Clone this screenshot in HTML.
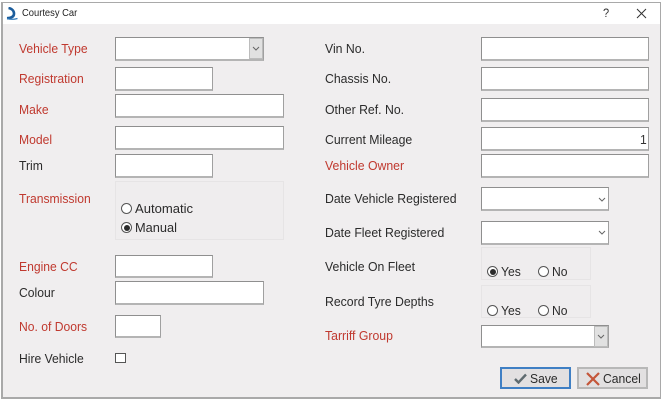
<!DOCTYPE html>
<html>
<head>
<meta charset="utf-8">
<style>
html,body{margin:0;padding:0;background:#fff;}
body{width:663px;height:401px;overflow:hidden;position:relative;font-family:"Liberation Sans",sans-serif;}
#win{position:absolute;left:0;top:0;width:663px;height:401px;filter:blur(0.35px);}
#win div,#win span,#win svg{position:absolute;box-sizing:border-box;}
.frame{left:1px;top:2px;width:660px;height:397px;background:#f0eeef;border:2px solid #a9a9a9;border-top-width:1px;border-right-width:1px;}
.tbar{left:3px;top:3px;width:657px;height:21px;background:#fff;}
.t{font-size:13.2px;line-height:16px;height:16px;white-space:nowrap;color:#2b2b2b;transform:scaleX(.92);transform-origin:0 50%;}
.c{transform:scaleX(.93);}
.r{color:#c0392f;}
.i{background:#fff;border:1px solid #8f8f8f;border-right:1px solid #a0a0a0;border-bottom:2px solid #b4b4b4;}
.g{background:#efedee;border:1px solid #e6e4e5;}
.rad{width:11px;height:11px;border:1px solid #555;border-radius:50%;background:#fff;}
.rad.on::after{content:"";position:absolute;left:1.5px;top:1.5px;width:6px;height:6px;border-radius:50%;background:#2b2b2b;}
.ddb{background:#e1e1e1;border:1px solid #bcbcbc;}
.btn{background:#e2e0e1;border:2px solid #b8b8b8;}
</style>
</head>
<body>
<div id="win">
<div class="frame"></div>
<div class="tbar"></div>
<svg style="left:6px;top:7px" width="12" height="13" viewBox="0 0 12 13"><path d="M2.5 1 C6 1.5 8.2 4 8 7 C7.8 9.5 5.5 11 1 11.2" stroke="#1c5d9c" stroke-width="2.6" fill="none"/><path d="M1 11.5 C4 12.5 8 12.5 11.5 11.5" stroke="#2f78b8" stroke-width="1.2" fill="none"/></svg>
<div class="t" style="left:22px;top:6px;font-size:10.2px;color:#222">Courtesy Car</div>
<div class="t" style="left:603px;top:5px;font-size:12px;color:#333">?</div>
<svg style="left:636px;top:8px" width="11" height="11" viewBox="0 0 11 11"><path d="M1 1L10 10M10 1L1 10" stroke="#333" stroke-width="1" fill="none"/></svg>

<div class="t r" style="left:19px;top:41px">Vehicle Type</div>
<div class="t r" style="left:19px;top:71px">Registration</div>
<div class="t r" style="left:19px;top:102px">Make</div>
<div class="t r" style="left:19px;top:132px">Model</div>
<div class="t" style="left:19px;top:158px">Trim</div>
<div class="t r" style="left:19px;top:191px">Transmission</div>
<div class="t r" style="left:19px;top:259px">Engine CC</div>
<div class="t" style="left:19px;top:285px">Colour</div>
<div class="t r" style="left:19px;top:319px">No. of Doors</div>
<div class="t" style="left:19px;top:351px">Hire Vehicle</div>

<div class="i" style="left:115px;top:37px;width:149px;height:24px"></div>
<div class="ddb" style="left:249px;top:38px;width:14px;height:21px"></div>
<svg style="left:252px;top:46px" width="8" height="6" viewBox="0 0 8 6"><path d="M1 1L4 4L7 1" stroke="#666" fill="none"/></svg>
<div class="i" style="left:115px;top:67px;width:98px;height:24px"></div>
<div class="i" style="left:115px;top:94px;width:169px;height:24px"></div>
<div class="i" style="left:115px;top:126px;width:169px;height:24px"></div>
<div class="i" style="left:115px;top:154px;width:98px;height:24px"></div>
<div class="g" style="left:115px;top:181px;width:169px;height:59px"></div>
<div class="rad" style="left:121px;top:203px"></div>
<div class="t" style="left:135px;top:201px;transform:scaleX(.99)">Automatic</div>
<div class="rad on" style="left:121px;top:222px"></div>
<div class="t" style="left:135px;top:220px;transform:scaleX(.97)">Manual</div>
<div class="i" style="left:115px;top:255px;width:98px;height:23px"></div>
<div class="i" style="left:115px;top:281px;width:149px;height:24px"></div>
<div class="i" style="left:115px;top:315px;width:46px;height:23px"></div>
<div style="left:115px;top:353px;width:11px;height:10px;background:#fff;border:1px solid #555"></div>

<div class="t c" style="left:325px;top:41px">Vin No.</div>
<div class="t c" style="left:325px;top:71px">Chassis No.</div>
<div class="t c" style="left:325px;top:102px">Other Ref. No.</div>
<div class="t c" style="left:325px;top:132px">Current Mileage</div>
<div class="t r c" style="left:325px;top:158px">Vehicle Owner</div>
<div class="t c" style="left:325px;top:191px">Date Vehicle Registered</div>
<div class="t c" style="left:325px;top:225px">Date Fleet Registered</div>
<div class="t c" style="left:325px;top:259px">Vehicle On Fleet</div>
<div class="t c" style="left:325px;top:294px">Record Tyre Depths</div>
<div class="t r c" style="left:325px;top:328px">Tarriff Group</div>

<div class="i" style="left:481px;top:37px;width:168px;height:24px"></div>
<div class="i" style="left:481px;top:67px;width:168px;height:24px"></div>
<div class="i" style="left:481px;top:98px;width:168px;height:24px"></div>
<div class="i" style="left:481px;top:127px;width:168px;height:24px"></div>
<div class="t" style="left:640px;top:132px;color:#333">1</div>
<div class="i" style="left:481px;top:154px;width:168px;height:24px"></div>
<div class="i" style="left:481px;top:187px;width:128px;height:24px"></div>
<svg style="left:598px;top:197px" width="8" height="6" viewBox="0 0 8 6"><path d="M1 1L4 4L7 1" stroke="#666" fill="none"/></svg>
<div class="i" style="left:481px;top:221px;width:128px;height:24px"></div>
<svg style="left:598px;top:230px" width="8" height="6" viewBox="0 0 8 6"><path d="M1 1L4 4L7 1" stroke="#666" fill="none"/></svg>

<div class="g" style="left:481px;top:247px;width:110px;height:33px"></div>
<div class="rad on" style="left:487px;top:266px"></div>
<div class="t" style="left:501px;top:264px">Yes</div>
<div class="rad" style="left:538px;top:266px"></div>
<div class="t" style="left:552px;top:264px">No</div>
<div class="g" style="left:481px;top:285px;width:110px;height:33px"></div>
<div class="rad" style="left:487px;top:305px"></div>
<div class="t" style="left:501px;top:303px">Yes</div>
<div class="rad" style="left:538px;top:305px"></div>
<div class="t" style="left:552px;top:303px">No</div>

<div class="i" style="left:481px;top:325px;width:128px;height:23px"></div>
<div class="ddb" style="left:594px;top:326px;width:14px;height:21px"></div>
<svg style="left:597px;top:334px" width="8" height="6" viewBox="0 0 8 6"><path d="M1 1L4 4L7 1" stroke="#666" fill="none"/></svg>

<div class="btn" style="left:500px;top:367px;width:71px;height:22px;border-color:#3f7fc4"></div>
<svg style="left:514px;top:373px" width="13" height="11" viewBox="0 0 13 11"><path d="M1 6L4.5 9.5L12 1.5" stroke="#5f6b70" stroke-width="2.4" fill="none"/></svg>
<div class="t" style="left:530px;top:371px;color:#2b2b2b">Save</div>
<div class="btn" style="left:577px;top:367px;width:71px;height:22px"></div>
<svg style="left:586px;top:372px" width="14" height="14" viewBox="0 0 14 14"><path d="M1 1L13 13M13 1L1 13" stroke="#c4563a" stroke-width="2.2" fill="none"/></svg>
<div class="t" style="left:603px;top:371px;color:#2b2b2b">Cancel</div>
</div>
</body>
</html>
